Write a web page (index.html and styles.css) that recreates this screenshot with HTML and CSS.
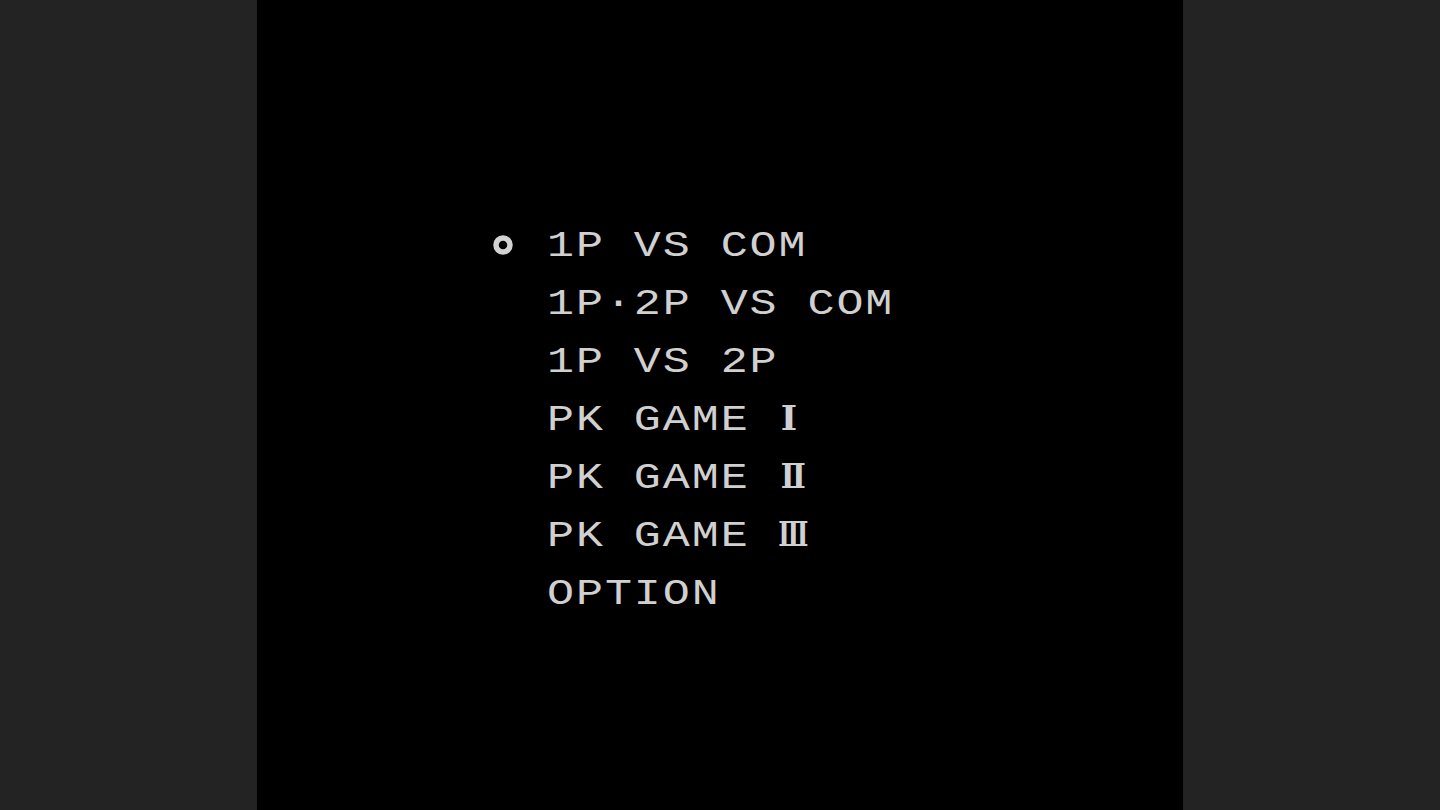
FILE: index.html
```html
<!DOCTYPE html>
<html>
<head>
<meta charset="utf-8">
<link rel="stylesheet" href="styles.css">
</head>
<body>
<div class="stage">
  <div class="screen">
    <ul class="menu">
      <li class="item selected"><span class="cursor"><svg width="24" height="24" viewBox="0 0 24 24"><circle cx="12" cy="12" r="7" fill="none" stroke="#d2d2d2" stroke-width="5.5"/></svg></span><span class="label">1P VS COM</span></li>
      <li class="item"><span class="label">1P·2P VS COM</span></li>
      <li class="item"><span class="label">1P VS 2P</span></li>
      <li class="item"><span class="label">PK GAME <span class="roman r1">Ⅰ</span></span></li>
      <li class="item"><span class="label">PK GAME <span class="roman r2">Ⅱ</span></span></li>
      <li class="item"><span class="label">PK GAME <span class="roman r3">Ⅲ</span></span></li>
      <li class="item"><span class="label">OPTION</span></li>
    </ul>
  </div>
</div>
</body>
</html>
```

FILE: styles.css
```css
html, body {
  margin: 0;
  padding: 0;
  height: 100%;
  background: #232323;
}

.stage {
  display: flex;
  justify-content: center;
  height: 810px;
}

.screen {
  width: 926px;
  height: 810px;
  background: #000;
}

.menu {
  list-style: none;
  margin: 0;
  padding: 218px 0 0 290px;
  font-family: "Liberation Mono", "DejaVu Sans Mono", monospace;
  font-size: 36px;
  color: #d0d0d0;
}

.item {
  position: relative;
  display: block;
  height: 58px;
}

.label {
  display: block;
  height: 58px;
  line-height: 58px;
  white-space: pre;
  letter-spacing: 1.55px;
  transform: scaleX(1.25);
  transform-origin: left center;
}

.roman {
  display: inline-block;
  font-family: "DejaVu Serif", serif;
  font-size: 33px;
  font-weight: bold;
  line-height: 0;
  letter-spacing: 0;
  transform-origin: left center;
}

.r1 {
  transform: translateX(2px) scaleX(0.85);
}

.r2 {
  transform: translateX(2px) scaleX(0.72);
}

.r3 {
  transform: scaleX(0.6);
}

.cursor {
  position: absolute;
  left: -56px;
  top: 15px;
  width: 24px;
  height: 24px;
  display: flex;
}
```
